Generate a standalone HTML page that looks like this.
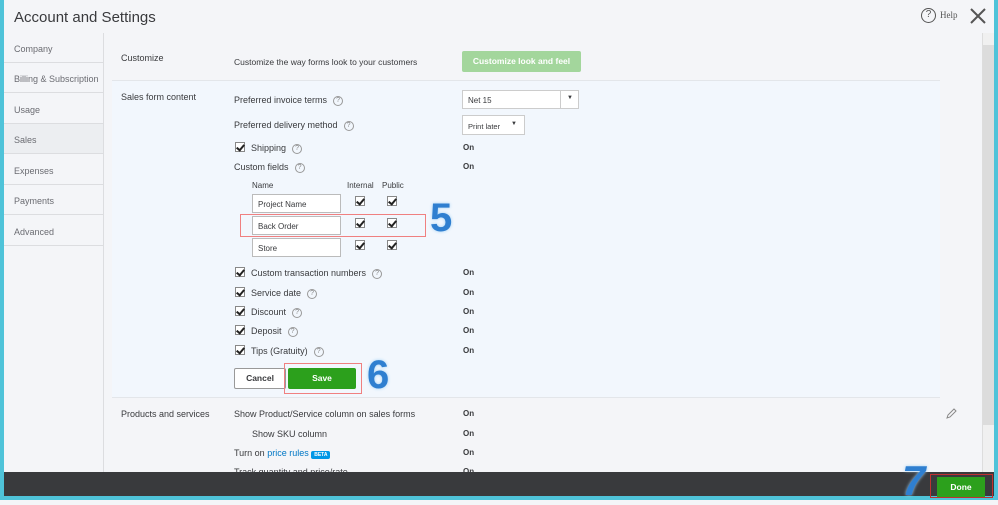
<!DOCTYPE html>
<html><head><style>
*{margin:0;padding:0;box-sizing:border-box}
body{width:998px;height:500px;overflow:hidden;background:#f4f5f8;font-family:"Liberation Sans",sans-serif;color:#393a3d;position:relative;font-size:9px}
.a{position:absolute}
.side div{position:absolute;left:4px;width:99px;height:30px;border-bottom:1px solid #dcdde0;color:#6b6c72;font-size:9px;padding:11px 0 0 10px}
.cb{position:absolute;width:10px;height:10px;border:1px solid #888;background:#fff}
.cb:after{content:"";position:absolute;left:2px;top:0px;width:3px;height:6px;border:solid #222;border-width:0 2px 2px 0;transform:rotate(40deg)}
.q{display:inline-block;width:10px;height:10px;border:1px solid #999;border-radius:50%;font-size:7px;text-align:center;line-height:8px;color:#888;margin-left:6px;vertical-align:middle}
.in{position:absolute;width:89px;height:19px;border:1px solid #bbb;background:#fff;font-size:8px;padding:5px 5px}
.on{position:absolute;left:463px;font-weight:bold;font-size:8px}
</style></head><body>
<div class="a" style="left:0;top:0;width:4px;height:500px;background:#4fc3d9"></div>
<div class="a" style="right:0;top:0;width:4px;height:500px;background:#4fc3d9"></div>
<div class="a" style="left:0;top:496px;width:998px;height:4px;background:#4fc3d9"></div>
<div class="a" style="left:14px;top:9px;font-size:15px;color:#393a3d">Account and Settings</div>
<div class="a" style="left:921px;top:8px;width:15px;height:15px;border:1.5px solid #555;border-radius:50%;font-size:10px;text-align:center;line-height:12px;color:#555">?</div>
<div class="a" style="left:940px;top:10px;font-family:'Liberation Serif',serif;font-size:9px;color:#555">Help</div>
<svg class="a" style="left:969px;top:7px" width="18" height="18"><path d="M2 2L16 16M16 2L2 16" stroke="#555" stroke-width="2"/></svg>
<div class="side">
<div style="top:33px">Company</div><div style="top:63px">Billing &amp; Subscription</div><div style="top:94px">Usage</div>
<div style="top:124px;background:#eceef1">Sales</div><div style="top:155px">Expenses</div><div style="top:185px">Payments</div><div style="top:216px">Advanced</div>
</div>
<div class="a" style="left:103px;top:33px;width:1px;height:440px;background:#dcdde0"></div>
<div class="a" style="left:121px;top:53px;font-size:9px">Customize</div>
<div class="a" style="left:234px;top:57px;font-size:8.5px">Customize the way forms look to your customers</div>
<div class="a" style="left:462px;top:51px;width:119px;height:21px;background:#a3d69c;border-radius:2px;color:#fff;font-weight:bold;font-size:8.5px;text-align:center;line-height:21px">Customize look and feel</div>
<div class="a" style="left:112px;top:80px;width:828px;height:318px;background:#f2f7fd;border-top:1px solid #e3e6ea;border-bottom:1px solid #e3e6ea"></div>
<div class="a" style="left:121px;top:92px">Sales form content</div>
<div class="a" style="left:234px;top:95px">Preferred invoice terms<span class="q">?</span></div>
<div class="a" style="left:462px;top:90px;width:117px;height:19px;border:1px solid #ccc;background:#fff;font-size:8px;padding:5px 5px">Net 15<span style="position:absolute;left:97px;top:0;width:1px;height:17px;background:#ccc"></span><span style="position:absolute;left:104px;top:4px;font-size:6px">▼</span></div>
<div class="a" style="left:234px;top:120px">Preferred delivery method<span class="q">?</span></div>
<div class="a" style="left:462px;top:115px;width:63px;height:20px;border:1px solid #ccc;background:#fff;font-size:7.5px;padding:6px 5px">Print later<span style="position:absolute;left:48px;top:5px;font-size:6px">▼</span></div>
<div class="cb" style="left:235px;top:142px"></div><div class="a" style="left:251px;top:143px">Shipping<span class="q">?</span></div><div class="on" style="top:143px">On</div>
<div class="a" style="left:234px;top:162px">Custom fields<span class="q">?</span></div><div class="on" style="top:162px">On</div>
<div class="a" style="left:252px;top:181px;font-size:8px">Name</div><div class="a" style="left:347px;top:181px;font-size:8px">Internal</div><div class="a" style="left:382px;top:181px;font-size:8px">Public</div>
<div class="in" style="left:252px;top:194px">Project Name</div><div class="cb" style="left:355px;top:196px"></div><div class="cb" style="left:387px;top:196px"></div>
<div class="in" style="left:252px;top:216px">Back Order</div><div class="cb" style="left:355px;top:218px"></div><div class="cb" style="left:387px;top:218px"></div>
<div class="in" style="left:252px;top:238px">Store</div><div class="cb" style="left:355px;top:240px"></div><div class="cb" style="left:387px;top:240px"></div>
<div class="a" style="left:240px;top:214px;width:186px;height:23px;border:1px solid #f08080"></div>
<div class="a" style="left:430px;top:196px;font-size:40px;font-weight:bold;color:#2f7fd0;text-shadow:0 0 3px #9fd0f5">5</div>
<div class="cb" style="left:235px;top:267px"></div><div class="a" style="left:251px;top:268px">Custom transaction numbers<span class="q">?</span></div><div class="on" style="top:268px">On</div>
<div class="cb" style="left:235px;top:287px"></div><div class="a" style="left:251px;top:288px">Service date<span class="q">?</span></div><div class="on" style="top:288px">On</div>
<div class="cb" style="left:235px;top:306px"></div><div class="a" style="left:251px;top:307px">Discount<span class="q">?</span></div><div class="on" style="top:307px">On</div>
<div class="cb" style="left:235px;top:325px"></div><div class="a" style="left:251px;top:326px">Deposit<span class="q">?</span></div><div class="on" style="top:326px">On</div>
<div class="cb" style="left:235px;top:345px"></div><div class="a" style="left:251px;top:346px">Tips (Gratuity)<span class="q">?</span></div><div class="on" style="top:346px">On</div>
<div class="a" style="left:234px;top:368px;width:52px;height:21px;border:1px solid #999;background:#fff;font-weight:bold;font-size:8.5px;text-align:center;line-height:19px;border-radius:2px">Cancel</div>
<div class="a" style="left:288px;top:368px;width:68px;height:21px;background:#2ca01c;color:#fff;font-weight:bold;font-size:8.5px;text-align:center;line-height:21px;border-radius:2px">Save</div>
<div class="a" style="left:284px;top:363px;width:78px;height:31px;border:1px solid #f08080"></div>
<div class="a" style="left:367px;top:353px;font-size:40px;font-weight:bold;color:#2f7fd0;text-shadow:0 0 3px #9fd0f5">6</div>
<div class="a" style="left:121px;top:409px">Products and services</div>
<div class="a" style="left:234px;top:409px">Show Product/Service column on sales forms</div><div class="on" style="top:409px">On</div>
<div class="a" style="left:252px;top:429px">Show SKU column</div><div class="on" style="top:429px">On</div>
<div class="a" style="left:234px;top:448px">Turn on <span style="color:#0077c5">price rules</span> <span style="background:#0097e6;color:#fff;font-size:5px;font-weight:bold;padding:1px 3px;border-radius:2px">BETA</span></div><div class="on" style="top:448px">On</div>
<div class="a" style="left:234px;top:467px">Track quantity and price/rate</div><div class="on" style="top:467px">On</div>
<svg class="a" style="left:945px;top:408px" width="12" height="12"><path d="M2 10L3 7L9 1L11 3L5 9Z" fill="none" stroke="#888" stroke-width="1"/></svg>
<div class="a" style="left:982px;top:33px;width:12px;height:440px;background:#f0f0f0;border-left:1px solid #ddd"></div>
<div class="a" style="left:983px;top:45px;width:11px;height:380px;background:#dcdcdc"></div>
<div class="a" style="left:4px;top:472px;width:990px;height:24px;background:#393a3d"></div>
<div class="a" style="left:937px;top:477px;width:48px;height:20px;background:#2ca01c;color:#fff;font-weight:bold;font-size:8.5px;text-align:center;line-height:20px">Done</div>
<div class="a" style="left:930px;top:474px;width:63px;height:24px;border:1px solid #c03030"></div>
<div class="a" style="left:902px;top:457px;font-size:42px;font-weight:bold;color:#2f7fd0;font-style:italic;text-shadow:0 0 3px #9fd0f5">7</div>
</body></html>
